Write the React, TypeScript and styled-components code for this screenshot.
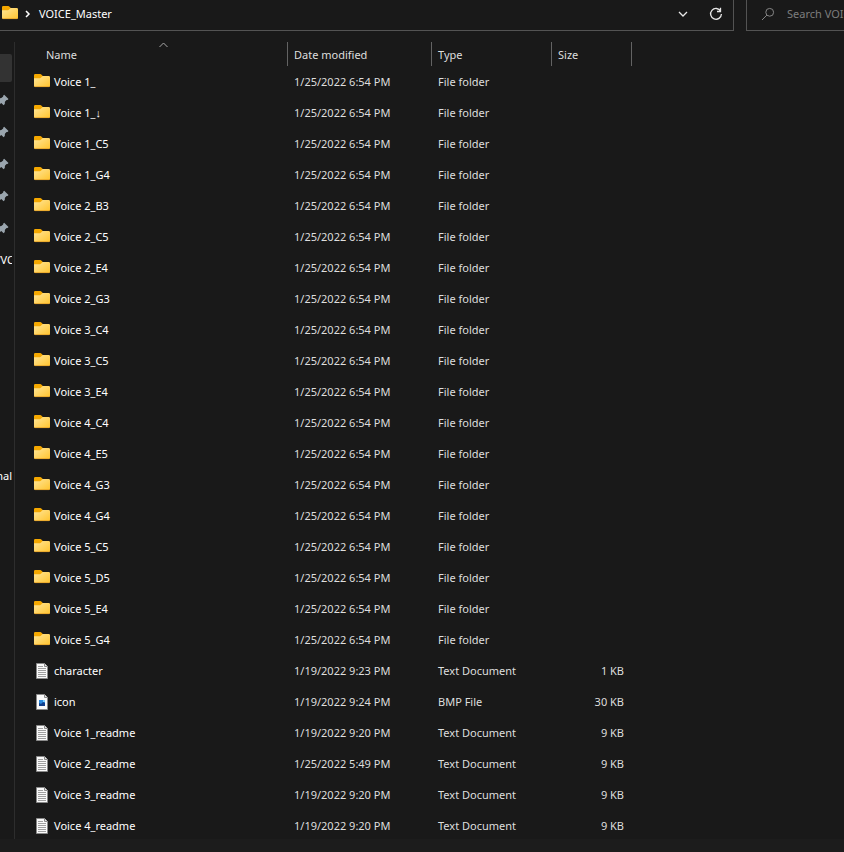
import React from "react";
import styled, { createGlobalStyle } from "styled-components";

const GlobalStyle = createGlobalStyle`
  *, *::before, *::after { box-sizing: border-box; }
  body {
    margin: 0;
    background: #191919;
    color: #fff;
    font-family: "Noto Sans", "Open Sans", sans-serif;
    font-size: 11px;
    line-height: 16px;
  }
  button, input { font: inherit; color: inherit; }
`;

const Window = styled.div`
  display: flex;
  flex-direction: column;
  height: 100vh;
  overflow: hidden;
`;

const TopBar = styled.header`
  display: flex;
  flex: none;
  gap: 12px;
  height: 31px;
`;

const AddressBar = styled.nav`
  display: flex;
  flex: 1;
  align-items: center;
  padding: 0 7px 3px 2px;
  border: solid #535353;
  border-width: 0 1px 1px 0;
`;

const Crumb = styled.a`
  flex: 1;
  color: #fff;
  text-decoration: none;
`;

const IconButton = styled.button`
  display: grid;
  place-items: center;
  width: 20px;
  height: 20px;
  padding: 0;
  border: 0;
  background: none;
`;

const AddressActions = styled.div`
  display: flex;
  gap: 13px;
`;

const Chevron = styled.svg`
  flex: none;
  margin: 0 8px 0 6px;
`;

const SearchBox = styled.label`
  display: flex;
  align-items: center;
  gap: 12px;
  width: 98px;
  padding: 0 0 3px 14px;
  border: solid #535353;
  border-width: 0 0 1px 1px;
`;

const SearchInput = styled.input`
  flex: 1;
  min-width: 0;
  padding: 0;
  border: 0;
  outline: 0;
  background: none;
  &::placeholder { color: #7d7d7d; opacity: 1; }
`;

const Body = styled.div`
  display: flex;
  flex: 1;
  min-height: 0;
  padding-top: 11px;
`;

const Sidebar = styled.aside`
  display: flex;
  flex: none;
  flex-direction: column;
  width: 15px;
  padding: 10px 2px 0 0;
  overflow: hidden;
  border-right: 1px solid #2d2d2d;
`;

const SideItem = styled.a<{ $kind?: "selected" | "pin" | "centered" | "spaced" }>`
  display: flex;
  flex: none;
  align-items: center;
  justify-content: ${(p) => (p.$kind === "centered" ? "center" : "flex-end")};
  height: ${(p) => (p.$kind === "selected" ? 28 : 32)}px;
  margin: ${(p) => (p.$kind === "selected" ? "2px 0" : p.$kind === "spaced" ? "184px 0 0" : "0")};
  padding-right: ${(p) => (p.$kind === "pin" ? 3 : 0)}px;
  border-radius: 0 2px 2px 0;
  background: ${(p) => (p.$kind === "selected" ? "#333" : "none")};
  color: #fff;
  text-decoration: none;
  overflow: hidden;

  svg { flex: none; }
`;

const FilePane = styled.main`
  flex: 1;
  min-width: 0;
  overflow: hidden;
`;

const FileTable = styled.table`
  width: 100%;
  table-layout: fixed;
  border-collapse: separate;
  border-spacing: 0;
`;

const Col = styled.col<{ $width?: number }>`
  width: ${(p) => (p.$width ? `${p.$width}px` : "auto")};
`;

const HeadCell = styled.th<{ $first?: boolean }>`
  height: 24px;
  padding: 0 0 0 ${(p) => (p.$first ? 25 : 0)}px;
  border-right: 1px solid #636363;
  font-weight: 400;
  text-align: left;
  color: #dedede;
  &:last-child { border: 0; }
`;

const SortButton = styled.button`
  position: relative;
  display: block;
  width: 100%;
  height: 24px;
  padding: 2px 6px 0;
  border: 0;
  background: none;
  text-align: left;
`;

const SortMark = styled.svg`
  position: absolute;
  top: 0;
  left: 50%;
  margin-left: -5px;
`;

const Cell = styled.td<{ $end?: boolean }>`
  height: 31px;
  padding: 0 8px 0 6px;
  color: #dedede;
  text-align: ${(p) => (p.$end ? "right" : "left")};
  white-space: nowrap;
`;

const FileName = styled.div`
  display: flex;
  align-items: center;
  gap: 4px;
  padding-left: 13px;
  color: #fff;
`;

const StatusBar = styled.footer`
  flex: none;
  height: 13px;
  background: #1c1c1c;
`;

const FolderIcon = () => (
  <svg width="16" height="16" viewBox="0 0 16 16" aria-hidden="true">
    <defs>
      <linearGradient id="folder" x1="0" y1="0" x2="1" y2="1">
        <stop offset="0" stopColor="#ffe69a" />
        <stop offset="1" stopColor="#ffc42e" />
      </linearGradient>
    </defs>
    <path d="M0 1.2Q0 0 1.2 0H6.2Q7 0 7.6 .7L9 2.2V6H0Z" fill="#f5a800" />
    <path d="M0 4.2H5.8Q6.6 4.2 7.2 3.4L7.8 2.7Q8.2 2 9 2H14.8Q16 2 16 3.2V11.8Q16 13 14.8 13H1.2Q0 13 0 11.8Z" fill="url(#folder)" />
    <path d="M.2 12Q.5 12.6 1.2 12.6H14.8Q15.5 12.6 15.8 12" fill="none" stroke="#e3a027" strokeWidth=".8" />
  </svg>
);

const DocIcon = ({ image }: { image?: boolean }) => (
  <svg width="16" height="16" viewBox="0 0 16 16" aria-hidden="true">
    <path d="M2.5.5h8l3 3v12h-11Z" fill="#fafafa" stroke="#8a8a8a" />
    <path d="M10.5.5v3h3" fill="#e4e4e4" stroke="#8a8a8a" />
    {image ? (
      <>
        <path d="M5 6h6v6H5Z" fill="#2a8be0" />
        <path d="M5 9l2 1 2-2 2 1v3H5Z" fill="#123f8c" />
        <path d="M9 6h2v2H9Z" fill="#7fd0ff" />
      </>
    ) : (
      <path d="M4 3.5h5M4 5.5h8M4 7.5h8M4 9.5h8M4 11.5h8M4 13.5h8" stroke="#a0a0a0" />
    )}
  </svg>
);

const PinIcon = () => (
  <svg width="12" height="12" viewBox="0 0 12 12" aria-hidden="true">
    <path d="M7.2.8l4.3 4.3-1 1-.9-.1-1.7 1.7-.1 2.3-1.2 1.2-2.3-2.3L.5 12 0 11.5l3-3.8L.7 5.5 2 4.2l2.3-.1L6.2 2.4l-.1-.7Z" fill="#9aa5ae" />
  </svg>
);

type Entry = { name: string; modified: string; type: string; size?: string };

const folders = [
  "1_", "1_↓", "1_C5", "1_G4", "2_B3", "2_C5", "2_E4", "2_G3", "3_C4", "3_C5",
  "3_E4", "4_C4", "4_E5", "4_G3", "4_G4", "5_C5", "5_D5", "5_E4", "5_G4",
];

const entries: Entry[] = [
  ...folders.map((f) => ({ name: `Voice ${f}`, modified: "1/25/2022 6:54 PM", type: "File folder" })),
  { name: "character", modified: "1/19/2022 9:23 PM", type: "Text Document", size: "1 KB" },
  { name: "icon", modified: "1/19/2022 9:24 PM", type: "BMP File", size: "30 KB" },
  { name: "Voice 1_readme", modified: "1/19/2022 9:20 PM", type: "Text Document", size: "9 KB" },
  { name: "Voice 2_readme", modified: "1/25/2022 5:49 PM", type: "Text Document", size: "9 KB" },
  { name: "Voice 3_readme", modified: "1/19/2022 9:20 PM", type: "Text Document", size: "9 KB" },
  { name: "Voice 4_readme", modified: "1/19/2022 9:20 PM", type: "Text Document", size: "9 KB" },
];

const pins = ["Pinned 1", "Pinned 2", "Pinned 3", "Pinned 4", "Pinned 5"];

export default function App() {
  return (
    <>
      <GlobalStyle />
      <Window>
        <TopBar>
          <AddressBar aria-label="Address">
            <FolderIcon />
            <Chevron width="7" height="8" viewBox="0 0 7 8" aria-hidden="true">
              <path d="M2 1l3 3-3 3" fill="none" stroke="#fff" strokeWidth="1.5" />
            </Chevron>
            <Crumb href="#">VOICE_Master</Crumb>
            <AddressActions>
              <IconButton aria-label="Previous locations">
                <svg width="10" height="6" viewBox="0 0 10 6">
                  <path d="M1 1l4 4 4-4" fill="none" stroke="#e8e8e8" strokeWidth="1.3" />
                </svg>
              </IconButton>
              <IconButton aria-label="Refresh">
                <svg width="14" height="14" viewBox="0 0 14 14">
                  <path d="M11.7 4.2A5.4 5.4 0 1 0 12.4 7M11.5.8v3.7H8" fill="none" stroke="#e8e8e8" strokeWidth="1.3" />
                </svg>
              </IconButton>
            </AddressActions>
          </AddressBar>
          <SearchBox>
            <svg width="14" height="14" viewBox="0 0 14 14" aria-hidden="true">
              <circle cx="8.7" cy="5.3" r="3.9" fill="none" stroke="#858585" />
              <path d="M5.9 8.1L1 13" stroke="#858585" />
            </svg>
            <SearchInput aria-label="Search" placeholder="Search VOICE_Master" />
          </SearchBox>
        </TopBar>
        <Body>
          <Sidebar>
            <SideItem href="#" $kind="selected" aria-label="Quick access" />
            {pins.map((p) => (
              <SideItem href="#" key={p} $kind="pin" aria-label={p}>
                <PinIcon />
              </SideItem>
            ))}
            <SideItem href="#" $kind="centered">/VO</SideItem>
            <SideItem href="#" $kind="spaced">nal</SideItem>
          </Sidebar>
          <FilePane>
            <FileTable>
              <colgroup>
                <Col $width={273} />
                <Col $width={144} />
                <Col $width={120} />
                <Col $width={80} />
                <Col />
              </colgroup>
              <thead>
                <tr>
                  <HeadCell $first aria-sort="ascending">
                    <SortButton>
                      Name
                      <SortMark width="9" height="6" viewBox="0 0 9 6" aria-hidden="true">
                        <path d="M.5 5l4-4 4 4" fill="none" stroke="#a8a8a8" />
                      </SortMark>
                    </SortButton>
                  </HeadCell>
                  <HeadCell><SortButton>Date modified</SortButton></HeadCell>
                  <HeadCell><SortButton>Type</SortButton></HeadCell>
                  <HeadCell><SortButton>Size</SortButton></HeadCell>
                  <HeadCell as="td" />
                </tr>
              </thead>
              <tbody>
                {entries.map((e) => (
                  <tr key={e.name}>
                    <Cell>
                      <FileName>
                        {e.type === "File folder" ? <FolderIcon /> : <DocIcon image={e.type === "BMP File"} />}
                        {e.name}
                      </FileName>
                    </Cell>
                    <Cell>{e.modified}</Cell>
                    <Cell>{e.type}</Cell>
                    <Cell $end>{e.size}</Cell>
                    <Cell />
                  </tr>
                ))}
              </tbody>
            </FileTable>
          </FilePane>
        </Body>
        <StatusBar />
      </Window>
    </>
  );
}
